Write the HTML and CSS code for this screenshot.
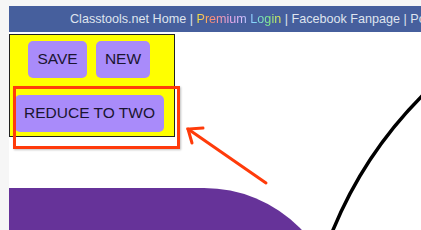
FILE: index.html
```html
<!DOCTYPE html>
<html>
<head>
<meta charset="utf-8">
<link rel="stylesheet" href="styles.css">
</head>
<body>
<div class="page">
  <div class="topbar">
    <span>Classtools.net Home</span> | <span class="rainbow">Premium Login</span> | <span>Facebook Fanpage</span> | <span>Podcasts</span>
  </div>
  <div class="panel">
    <div class="row">
      <button class="btn btn-save">SAVE</button>
      <button class="btn btn-new">NEW</button>
    </div>
    <button class="btn btn-reduce">REDUCE TO TWO</button>
  </div>
  <div class="blob"></div>
  <div class="highlight"></div>
  <svg class="overlay" width="412" height="224" viewBox="0 0 412 224">
    <circle cx="706" cy="381" r="413" fill="none" stroke="#000" stroke-width="3.5"/>
    <g stroke="#ff3b0a" stroke-width="3" stroke-linecap="round" fill="none">
      <line x1="257" y1="177" x2="179" y2="123"/>
      <polyline points="194,122 179,123 183,137"/>
    </g>
  </svg>
</div>
</body>
</html>
```
FILE: styles.css
```css
html, body {
  margin: 0;
  padding: 0;
}
body {
  background: #f6f6f6;
  padding: 6px 0 0 9px;
  font-family: "Liberation Sans", Arial, sans-serif;
  height: 224px;
  overflow: hidden;
}
.page {
  position: relative;
  background: #ffffff;
  height: 224px;
  overflow: hidden;
}
.topbar {
  height: 26px;
  line-height: 26px;
  background: #465f9d;
  color: #dfe4ee;
  font-size: 12.6px;
  padding-left: 61px;
  white-space: nowrap;
  overflow: hidden;
}
.rainbow {
  background: linear-gradient(90deg, #f4f040 0%, #ff8a70 18%, #f0a8e8 40%, #d8c0ff 55%, #80d4ff 68%, #7ff08a 85%, #f0f050 100%);
  -webkit-background-clip: text;
  background-clip: text;
  color: transparent;
}
.panel {
  margin-top: 2px;
  width: 164px;
  height: 101px;
  background: #ffff00;
  border: 1px solid #222;
  box-sizing: content-box;
}
.row {
  display: flex;
  gap: 9px;
  padding: 6px 0 0 18px;
}
.btn {
  background: #a98bfa;
  border: none;
  border-radius: 5px;
  height: 37px;
  font-family: "Liberation Sans", Arial, sans-serif;
  font-size: 15.5px;
  line-height: 35px;
  color: #1a1530;
  padding: 0 0 2px;
}
.btn-save { width: 59px; }
.btn-new { width: 54px; }
.btn-reduce {
  display: block;
  width: 149px;
  margin: 17px 0 0 5px;
}
.blob {
  margin-top: 51px;
  width: 330px;
  height: 140px;
  background: #663399;
  border-top-right-radius: 135px;
}
.highlight {
  position: absolute;
  left: 4px;
  top: 80px;
  width: 161px;
  height: 57px;
  border: 3px solid #ff3b0a;
  box-shadow: 1px 1px 2px rgba(0,0,0,0.25);
}
.overlay {
  position: absolute;
  left: 0;
  top: 0;
}
```
